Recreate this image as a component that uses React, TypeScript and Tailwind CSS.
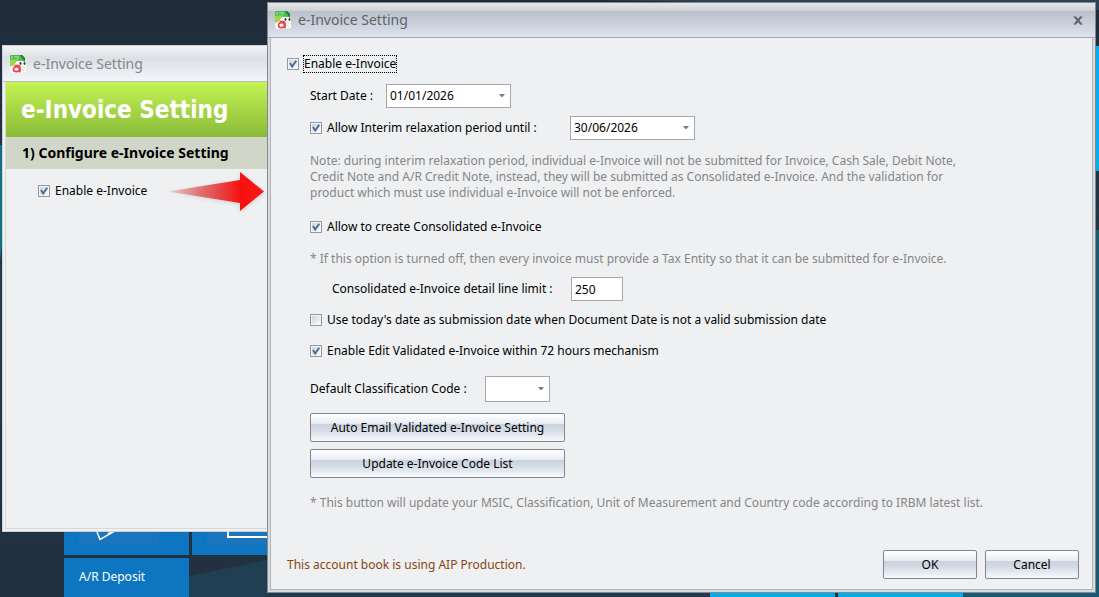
import { useId, useState } from 'react';
import type { ReactNode } from 'react';

type CheckProps = {
  label: string;
  defaultChecked?: boolean;
  focused?: boolean;
};

const CheckField = ({ label, defaultChecked = false, focused = false }: CheckProps) => {
  const id = useId();
  const [checked, setChecked] = useState(defaultChecked);

  return (
    <div className="flex h-5 items-center">
      <span className="relative mr-1 block size-3">
        <input
          id={id}
          type="checkbox"
          checked={checked}
          onChange={(e) => setChecked(e.target.checked)}
          className="block size-3 appearance-none border border-[#8e99a8] bg-linear-to-br from-[#c9ced6] to-white shadow-[inset_0_0_0_1px_#f4f6f8]"
        />
        {checked && (
          <svg viewBox="0 0 12 12" className="pointer-events-none absolute inset-0 size-3">
            <path d="M3 5 L5.2 8.5 L9.2 2.8" fill="none" stroke="#4a6c98" strokeWidth="2" />
          </svg>
        )}
      </span>
      <label
        htmlFor={id}
        className={
          focused
            ? 'border border-dotted border-black leading-4'
            : 'border border-transparent leading-4'
        }
      >
        {label}
      </label>
    </div>
  );
};

type ComboProps = {
  id: string;
  options: string[];
  className: string;
  label?: string;
};

const Combo = ({ id, options, className, label }: ComboProps) => (
  <div className={`relative ${className}`}>
    <select
      id={id}
      aria-label={label}
      className="block h-full w-full appearance-none border border-[#a3a8b0] bg-white pl-[3px] pr-5 outline-none"
    >
      {options.map((option) => (
        <option key={option}>{option}</option>
      ))}
    </select>
    <svg viewBox="0 0 6 4" className="pointer-events-none absolute right-1.5 top-1/2 h-1 w-1.5 -translate-y-1/2">
      <path d="M0 0 H6 L3 3.5 Z" fill="#777a80" />
    </svg>
  </div>
);

const PushButton = ({ children, className }: { children: ReactNode; className: string }) => (
  <button
    type="button"
    className={`h-[29px] rounded-xs border border-[#80858f] bg-[linear-gradient(#ffffff_0,#e9eef4_35%,#c9d2dd_37%,#d3dbe4_60%,#f8fafc_100%)] ${className}`}
  >
    {children}
  </button>
);

const AppIcon = () => (
  <svg viewBox="0 0 18 20" className="h-5 w-[18px] shrink-0">
    <path d="M1 2 Q1 1 2 1 H13 L16 4 V11 H1 Z" fill="#4db851" />
    <path d="M11 1 H13 L16 4 V8 Z" fill="#168332" />
    <path d="M1 6 L9 5 L6 12 H1 Z" fill="#9ad648" />
    <path d="M3 2 V5 M5 3 H8 M9 2 V5" stroke="#b5ecac" strokeWidth="1" />
    <path d="M1 14 L5 11 L8 7 Q12 6 17 8 L17 18 L12 19 H2 Z" fill="#fafafa" />
    <ellipse cx="11.5" cy="9.5" rx="1" ry="1.4" fill="#35393a" />
    <ellipse cx="15.5" cy="9.5" rx="1" ry="1.4" fill="#35393a" />
    <ellipse cx="7.5" cy="15.2" rx="3" ry="2.4" fill="#fff" stroke="#e5414a" strokeWidth="1.6" />
    <path d="M5.5 11.6 H9 Q11 11.8 11 14 V18.5" fill="none" stroke="#e5414a" strokeWidth="1.6" />
    <path d="M14 12.5 L16 14.5 M13 15 L15 17" stroke="#c5d88e" strokeWidth="1" />
  </svg>
);

const PointerArrow = () => (
  <svg viewBox="0 0 98 42" className="ml-[19px] h-[42px] w-[98px] shrink-0 drop-shadow-sm">
    <defs>
      <linearGradient id="arrow-fill" x1="0" x2="1" y1="0" y2="0">
        <stop offset="0" stopColor="#e03030" stopOpacity="0.15" />
        <stop offset="0.4" stopColor="#e23c3c" stopOpacity="0.75" />
        <stop offset="0.75" stopColor="#f81010" />
        <stop offset="1" stopColor="#ff1616" />
      </linearGradient>
    </defs>
    <path d="M1 21.5 L73 10 V2 L97 21.5 L73 41 V33 Z" fill="url(#arrow-fill)" />
  </svg>
);

const Desktop = () => (
  <div className="absolute inset-0 overflow-hidden bg-linear-to-b from-[#202b39] via-[#203a4b] to-[#222f3e]">
    <svg viewBox="0 0 1099 597" preserveAspectRatio="none" className="absolute inset-0 size-full">
      <path d="M0 145 L3 145 V240 L0 260 Z" fill="#107183" />
      <path d="M189 576 L267 560 V597 H189 Z" fill="#203f52" />
      <path d="M600 0 H1099 V10 H1080 Z" fill="#2b4354" />
      <path d="M267 590 H710 V597 H267 Z" fill="#22374a" />
      <path d="M963 590 L1092 590 L1092 230 H1099 V597 H963 Z" fill="#165b73" />
    </svg>
    {/* Start screen tiles, partly covered by the windows */}
    <div className="absolute bottom-0 left-16 grid grid-cols-[125px_125px] gap-[3px]">
      <div className="flex h-[125px] items-end bg-[#0e76c0] pl-[15px]">
        <div className="mb-[10px] flex h-24 w-20 items-end bg-[#1b75bd]">
          <svg viewBox="0 0 40 40" className="mb-1 ml-3 size-10">
            <path
              d="M1 18 L9 38.5 L38 22 L30 4 Z M14 30 L20 26 M17 33 L25 28"
              fill="none"
              stroke="#fff"
              strokeWidth="1.5"
            />
          </svg>
        </div>
      </div>
      <div className="flex h-[125px] items-end bg-[#0e76c0] pl-[15px]">
        <div className="mb-[10px] flex h-24 w-20 items-end bg-[#1b75bd] pb-[7px] pl-5">
          <div className="h-10 w-14 border-2 border-white" />
        </div>
      </div>
      <div className="h-[39px] bg-[#0e76c0] pl-[15px] pt-[11px] leading-4 text-white">A/R Deposit</div>
    </div>
    <div className="absolute right-0 top-[46px] h-[125px] w-5 bg-[#00aeef]" />
    <div className="absolute bottom-0 right-[136px] flex gap-[3px]">
      <div className="h-2 w-[125px] bg-[#00aeef]" />
      <div className="h-2 w-[125px] bg-[#00aeef]" />
    </div>
  </div>
);

const WizardWindow = () => (
  <section className="absolute bottom-[65px] left-0.5 top-[45px] flex w-[480px] flex-col border border-[#cfd3d7] bg-[#eef0f2]">
    <header className="flex h-9 shrink-0 items-center gap-1.5 border-b border-[#b9bdc2] bg-linear-to-b from-[#f3f4f6] via-[#dcdfe4] via-35% to-[#f3f5f9] pl-1.5 text-sm text-[#82868b]">
      <AppIcon />
      <span>e-Invoice Setting</span>
    </header>
    <div className="mx-0.5 mb-0.5 flex grow flex-col border border-t-0 border-[#d9d9d9]">
      <h1 className="flex h-[55px] items-center bg-linear-to-b from-[#c4f354] to-[#8abb38] pl-[15px] font-['DejaVu_Sans_Condensed','DejaVu_Sans',sans-serif] text-2xl font-bold text-white">
        e-Invoice Setting
      </h1>
      <h2 className="flex h-8 items-center bg-[#d0d6c8] pl-4 text-sm font-bold">
        1) Configure e-Invoice Setting
      </h2>
      <div className="flex h-11 items-center pl-8">
        <CheckField label="Enable e-Invoice" defaultChecked />
        <PointerArrow />
      </div>
    </div>
  </section>
);

const SettingDialog = () => (
  <section
    role="dialog"
    aria-label="e-Invoice Setting"
    className="absolute bottom-1 left-[267px] right-[3px] top-0.5 flex flex-col border border-[#85888d] bg-[#d7dadf]"
  >
    <header className="flex h-[35px] shrink-0 items-center gap-1.5 border-b border-[#a4a8ad] bg-[linear-gradient(#e6e7e9_0,#cfd1d4_8px,#b9c0ca_8px,#dde3ee_100%)] pl-1.5 pr-2.5 text-sm text-[#5e6369]">
      <AppIcon />
      <span>e-Invoice Setting</span>
      <button type="button" aria-label="Close" className="ml-auto p-0.5">
        <svg viewBox="0 0 10 9" className="h-[9px] w-2.5">
          <path d="M2 1 L8 8 M8 1 L2 8" stroke="#5d636c" strokeWidth="2" />
          <path d="M0.5 1 H3 M7 1 H9.5 M0.5 8 H3 M7 8 H9.5" stroke="#5d636c" />
        </svg>
      </button>
    </header>
    <form
      className="mx-0.5 mb-0.5 flex grow flex-col border border-t-0 border-[#b0b3b7] bg-[#eef0f2] pb-2.5 pl-4 pr-[13px] pt-4"
      onSubmit={(e) => e.preventDefault()}
    >
      <CheckField label="Enable e-Invoice" defaultChecked focused />
      <div className="flex flex-col pl-[23px]">
        <div className="mt-2.5 flex h-6 items-center">
          <label htmlFor="start-date" className="w-[76px]">
            Start Date :
          </label>
          <Combo id="start-date" options={['01/01/2026']} className="h-6 w-[125px]" />
        </div>
        <div className="mt-2 flex h-6 items-center">
          <div className="w-[260px]">
            <CheckField label="Allow Interim relaxation period until :" defaultChecked />
          </div>
          <Combo id="interim-date" label="Interim relaxation end date" options={['30/06/2026']} className="h-6 w-[125px]" />
        </div>
        <p className="mt-[13px] leading-4 text-[#868686]">
          Note: during interim relaxation period, individual e-Invoice will not be submitted for Invoice, Cash Sale, Debit Note,
          <br />
          Credit Note and A/R Credit Note, instead, they will be submitted as Consolidated e-Invoice. And the validation for
          <br />
          product which must use individual e-Invoice will not be enforced.
        </p>
        <div className="mt-4">
          <CheckField label="Allow to create Consolidated e-Invoice" defaultChecked />
        </div>
        <p className="mt-3.5 leading-4 text-[#868686]">
          * If this option is turned off, then every invoice must provide a Tax Entity so that it can be submitted for e-Invoice.
        </p>
        <div className="mt-2.5 flex h-6 items-center pl-[22px]">
          <label htmlFor="line-limit" className="w-[239px]">
            Consolidated e-Invoice detail line limit :
          </label>
          <input
            id="line-limit"
            type="text"
            defaultValue="250"
            className="h-6 w-[52px] border border-[#a3a8b0] bg-white pl-[3px] outline-none"
          />
        </div>
        <div className="mt-[9px] flex flex-col gap-[11px]">
          <CheckField label="Use today's date as submission date when Document Date is not a valid submission date" />
          <CheckField label="Enable Edit Validated e-Invoice within 72 hours mechanism" defaultChecked />
        </div>
        <div className="mt-[15px] flex h-[26px] items-center">
          <label htmlFor="class-code" className="w-[175px]">
            Default Classification Code :
          </label>
          <Combo id="class-code" options={['']} className="h-[26px] w-[65px]" />
        </div>
        <div className="mt-[11px] flex w-[255px] flex-col gap-[7px]">
          <PushButton className="w-full">Auto Email Validated e-Invoice Setting</PushButton>
          <PushButton className="w-full">Update e-Invoice Code List</PushButton>
        </div>
        <p className="mt-[17px] leading-4 text-[#868686]">
          * This button will update your MSIC, Classification, Unit of Measurement and Country code according to IRBM latest list.
        </p>
      </div>
      <footer className="mt-auto flex items-center gap-2">
        <p className="grow text-[#8a4510]">This account book is using AIP Production.</p>
        <PushButton className="w-[94px]">OK</PushButton>
        <PushButton className="w-[94px]">Cancel</PushButton>
      </footer>
    </form>
  </section>
);

const App = () => (
  <main className="relative min-h-screen overflow-hidden font-['Noto_Sans','DejaVu_Sans_Condensed',sans-serif] text-xs text-black">
    <Desktop />
    <WizardWindow />
    <SettingDialog />
  </main>
);

export default App;
